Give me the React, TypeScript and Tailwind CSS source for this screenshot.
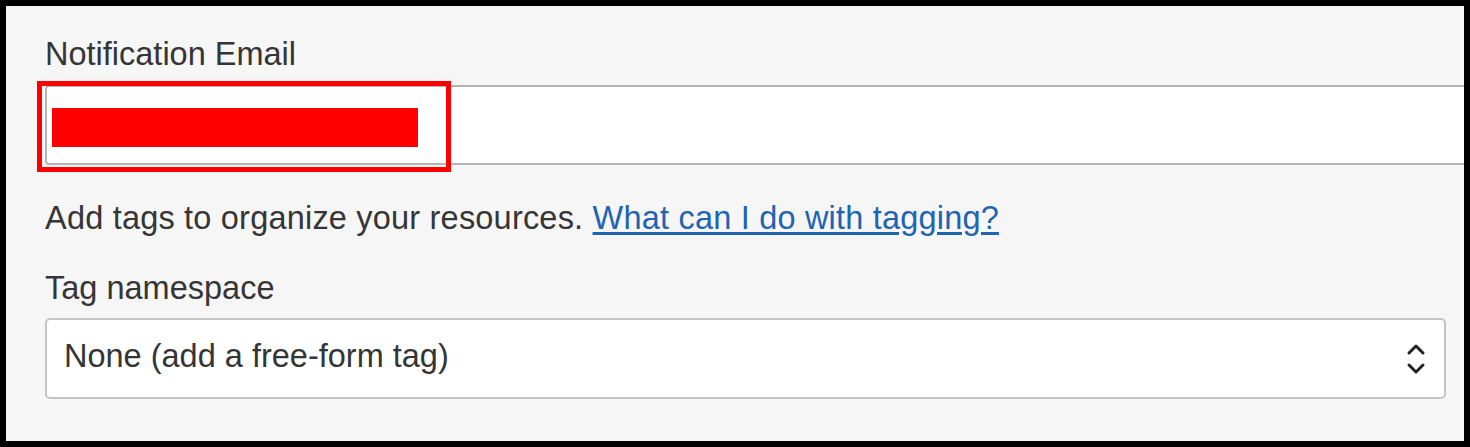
import { ChangeEvent, useState } from "react"

const font = { fontFamily: '"Liberation Sans", Arial, sans-serif' }

export default function App() {
  const [email, setEmail] = useState("")
  const [ns, setNs] = useState("none")

  return (
    <div
      style={font}
      className="relative w-[1470px] h-[447px] overflow-hidden border-[6px] border-black bg-[#f6f6f6] text-[#353535] pl-[39px] pr-[18px] pt-[30px] flex flex-col"
    >
      <label className="text-[32.5px] leading-[36px]">Notification Email</label>

      <div className="relative mt-[13px] -mr-[24px]">
        <input
          value={email}
          onChange={(e: ChangeEvent<HTMLInputElement>) => setEmail(e.target.value)}
          className="block w-full h-[80px] bg-white border-2 border-[#b4b4b4] rounded-l-[4px] outline-none px-[16px] text-[32px]"
        />
        {/* redaction overlay */}
        <div className="absolute left-[-8px] top-[-4px] w-[414px] h-[91px] border-[5px] border-[#ff0000] pointer-events-none" />
        <div className="absolute left-[7px] top-[23px] w-[366px] h-[39px] bg-[#ff0000] pointer-events-none" />
      </div>

      <p className="mt-[35px] text-[32.5px] leading-[36px] tracking-[0.2px] whitespace-nowrap">
        Add tags to organize your resources.{" "}
        <a href="#" className="text-[#1f64b0] underline underline-offset-[3px]">
          What can I do with tagging?
        </a>
      </p>

      <label className="mt-[34px] text-[32.5px] leading-[36px]">Tag namespace</label>

      <div className="relative mt-[12px] h-[81px] bg-white border-2 border-[#c4c4c4] rounded-[5px] flex items-center">
        <select
          value={ns}
          onChange={(e) => setNs(e.target.value)}
          className="appearance-none w-full h-full bg-transparent outline-none pl-[17px] pr-[60px] pb-[4px] text-[32.5px] text-[#353535]"
        >
          <option value="none">None (add a free-form tag)</option>
        </select>
        <svg
          width="20"
          height="36"
          viewBox="0 0 20 36"
          className="absolute right-[18px] top-1/2 -translate-y-1/2 pointer-events-none"
          fill="none"
          stroke="#222"
          strokeWidth="3"
          strokeLinecap="round"
          strokeLinejoin="round"
        >
          <path d="M3 12 L10 5 L17 12" />
          <path d="M3 24 L10 31 L17 24" />
        </svg>
      </div>
    </div>
  )
}
